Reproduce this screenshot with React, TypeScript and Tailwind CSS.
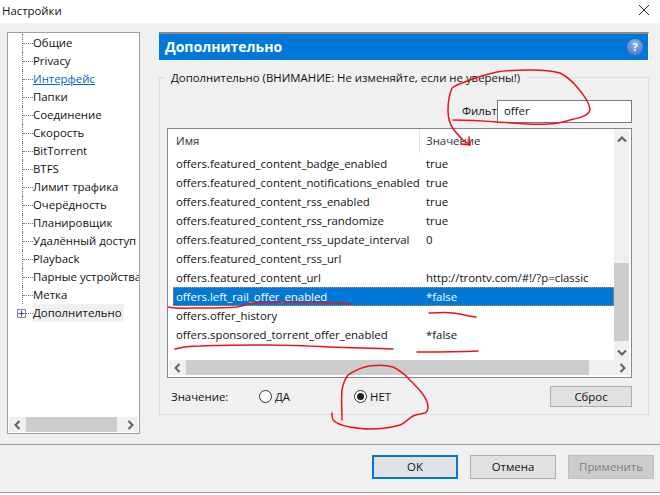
const font = "[font-family:'Open_Sans','Noto_Sans',sans-serif]"

const treeItems = [
  "Общие",
  "Privacy",
  "Интерфейс",
  "Папки",
  "Соединение",
  "Скорость",
  "BitTorrent",
  "BTFS",
  "Лимит трафика",
  "Очерёдность",
  "Планировщик",
  "Удалённый доступ",
  "Playback",
  "Парные устройства",
  "Метка",
]

const rows = [
  { name: "offers.featured_content_badge_enabled", value: "true" },
  { name: "offers.featured_content_notifications_enabled", value: "true" },
  { name: "offers.featured_content_rss_enabled", value: "true" },
  { name: "offers.featured_content_rss_randomize", value: "true" },
  { name: "offers.featured_content_rss_update_interval", value: "0" },
  { name: "offers.featured_content_rss_url", value: "" },
  { name: "offers.featured_content_url", value: "http://trontv.com/#!/?p=classic" },
  { name: "offers.left_rail_offer_enabled", value: "*false", selected: true },
  { name: "offers.offer_history", value: "" },
  { name: "offers.sponsored_torrent_offer_enabled", value: "*false" },
]

function Chevron({ dir }: { dir: "up" | "down" | "left" | "right" }) {
  const paths = {
    up: "M1 6.5 L5 2.5 L9 6.5",
    down: "M1 3.5 L5 7.5 L9 3.5",
    left: "M6.5 1 L2.5 5 L6.5 9",
    right: "M3.5 1 L7.5 5 L3.5 9",
  }
  return (
    <svg width="10" height="10" viewBox="0 0 10 10" fill="none">
      <path d={paths[dir]} stroke="#606060" strokeWidth="2" />
    </svg>
  )
}

function Button({ label, primary, disabled, className }: { label: string; primary?: boolean; disabled?: boolean; className?: string }) {
  return (
    <button
      className={
        "flex items-center justify-center text-[11.4px] " +
        (primary
          ? "border-2 border-[#0078d7] bg-[#e1e1e1] text-[#111] "
          : disabled
            ? "border border-[#bfbfbf] bg-[#cccccc] text-[#808080] "
            : "border border-[#adadad] bg-[#e1e1e1] text-[#111] ") +
        className
      }
    >
      {label}
    </button>
  )
}

function Tree() {
  return (
    <div className="flex flex-col w-[133px] h-[402px] border border-[#a0a0a0] bg-white">
      <div className="flex-1 pl-[14px] pt-[1px] text-[11.4px] text-[#111]">
        {treeItems.map(item => (
          <div key={item} className="flex items-center h-[18px]">
            <div className="flex items-center w-[11px] h-full border-l border-dotted border-[#777]">
              <div className="w-full border-t border-dotted border-[#777]" />
            </div>
            <span className={"whitespace-nowrap overflow-hidden max-w-[106px] " + (item === "Интерфейс" ? "text-[#0066cc] underline" : "")}>
              {item}
            </span>
          </div>
        ))}
        <div className="relative flex items-center h-[18px]">
          <div className="flex items-center w-[11px] h-full">
            <div className="w-full border-t border-dotted border-[#777]" />
          </div>
          <div className="absolute left-[-5px] top-[5px] flex items-center justify-center w-[9px] h-[9px] border border-[#8a8a8a] bg-white">
            <svg width="7" height="7" viewBox="0 0 7 7">
              <path d="M0.5 3.5 H6.5 M3.5 0.5 V6.5" stroke="#2a4a9a" strokeWidth="1" />
            </svg>
          </div>
          <span className="pr-[2px] bg-[#f0f0f0] whitespace-nowrap">Дополнительно</span>
        </div>
      </div>
      <div className="flex items-center h-[15px] mx-[1px] mb-[1px] bg-[#f0f0f0]">
        <div className="flex items-center justify-center w-[17px]"><Chevron dir="left" /></div>
        <div className="w-[91px] h-full bg-[#cdcdcd]" />
        <div className="flex-1" />
        <div className="flex items-center justify-center w-[17px]"><Chevron dir="right" /></div>
      </div>
    </div>
  )
}

function OptionList() {
  return (
    <div className="flex flex-col h-[250px] border border-[#828790] bg-white">
      <div className="flex flex-1 min-h-0">
        <div className="flex flex-col flex-1 min-w-0">
          <div className="flex h-[24px] text-[11.4px] text-[#333]">
            <div className="flex items-center w-[252px] pl-[8px] border-r border-[#e5e5e5]">Имя</div>
            <div className="flex items-center pl-[6px]">Значение</div>
          </div>
          <div className="pt-[1px] text-[11.4px] text-[#111]">
            {rows.map(row => (
              <div
                key={row.name}
                className={
                  "flex items-center h-[19px] ml-[5px] " +
                  (row.selected ? "bg-[#0078d7] text-white outline outline-dotted outline-[#d09040] -outline-offset-1" : "")
                }
              >
                <span className="w-[248px] pl-[3px] whitespace-nowrap">{row.name}</span>
                <span className="pl-[5px] whitespace-nowrap">{row.value}</span>
              </div>
            ))}
          </div>
        </div>
        <div className="flex flex-col w-[15px] mr-[2px] bg-[#f0f0f0]">
          <div className="flex items-center justify-center h-[17px] mt-[2px]"><Chevron dir="up" /></div>
          <div className="flex-1 pt-[115px]">
            <div className="h-[78px] bg-[#cdcdcd]" />
          </div>
          <div className="flex items-center justify-center h-[17px]"><Chevron dir="down" /></div>
        </div>
      </div>
      <div className="flex items-center h-[15px] mx-[1px] mb-[2px] bg-[#f0f0f0]">
        <div className="flex items-center justify-center w-[17px]"><Chevron dir="left" /></div>
        <div className="w-[403px] h-full bg-[#cdcdcd]" />
        <div className="flex-1" />
        <div className="flex items-center justify-center w-[17px]"><Chevron dir="right" /></div>
      </div>
    </div>
  )
}

function Radio({ label, checked }: { label: string; checked?: boolean }) {
  return (
    <label className="flex items-center gap-[3px]">
      <span className="flex items-center justify-center w-[13px] h-[13px] rounded-full border border-[#333] bg-white">
        {checked && <span className="w-[7px] h-[7px] rounded-full bg-[#222]" />}
      </span>
      {label}
    </label>
  )
}

function Annotations() {
  return (
    <svg className="absolute left-0 top-0 pointer-events-none" width="660" height="495" viewBox="0 0 660 495" fill="none" stroke="#e8141c" strokeWidth="1.5" strokeLinecap="round" strokeLinejoin="round">
      <path d="M453 120 C470 120 485 121 497 122 C515 123 532 125 547 124 C556 124 564 122 570 120 C578 118 590 116 590 109 C589 102 584 95 577 87 C572 81 566 76 560 73 C550 70 540 70 530 70 C518 70 507 70 497 72 C487 74 478 77 470 80 C463 83 457 84 452 88 C449 95 448 102 448 110 C448 116 449 122 452 127 C455 132 459 136 463 140 L470 145" />
      <path d="M461 144 L470 145 L469 137" />
      <path d="M168 307 C178 309 190 308 200 308 C212 308 226 308 237 307 C243 306 247 304 253 303 C262 302 272 302 283 302 C305 302 330 302 350 304" />
      <path d="M175 349 C182 347 191 346 200 346 C222 345 245 345 267 345 C290 345 310 346 330 347 C350 348 372 348 393 349" />
      <path d="M429 313 C437 313 445 312 453 313 C461 314 468 316 476 317" />
      <path d="M417 352 C437 352 458 352 478 351" />
      <path d="M342 420 C342 410 341 400 342 390 C343 384 345 379 348 375 C354 371 362 367 370 366 C378 365 386 365 393 367 C398 369 401 372 405 375 C411 381 417 387 422 393 C425 397 428 402 428 407 C428 411 427 412 425 413 C420 414 417 414 413 416 C408 419 405 423 400 425 C390 428 380 429 370 429 C363 429 356 428 350 427 C344 426 337 424 333 420 C332 418 332 415 332 413" />
    </svg>
  )
}

export default function App() {
  return (
    <div className={"relative flex flex-col w-[660px] h-[495px] bg-white overflow-hidden " + font}>
      <div className="flex items-start justify-between h-[23px] pl-[2px] pr-[11px] pt-[2px] text-[11.4px] text-[#111]">
        <span>Настройки</span>
        <svg className="mt-[3px]" width="10" height="10" viewBox="0 0 10 10" fill="none">
          <path d="M0 0 L10 10 M10 0 L0 10" stroke="#222" strokeWidth="1" />
        </svg>
      </div>

      <div className="flex gap-[19px] h-[421px] pl-[7px] pt-[9px] bg-[#f0f0f0]">
        <Tree />
        <div className="flex flex-col w-[491px] text-[11.4px] text-[#111]">
          <div className="flex items-center justify-between w-[490px] h-[29px] pl-[6px] pr-[5px] border-t-2 border-[#8a8a8a] border-r border-r-white border-b border-b-white bg-[#0078d7]">
            <span className="pb-[2px] text-[14px] font-bold text-white">Дополнительно</span>
            <span className="flex items-center justify-center w-[16px] h-[16px] rounded-full bg-[radial-gradient(circle_at_50%_30%,#8fb4e8,#3f6fc0)] text-[11px] font-bold text-white">?</span>
          </div>
          <div className="relative mt-[16px] w-[490px] h-[338px] border border-[#dcdcdc] pl-[7px] pr-[16px]">
            <span className="absolute left-[4px] top-[-9px] px-[7px] bg-[#f0f0f0] whitespace-nowrap">
              Дополнительно (ВНИМАНИЕ: Не изменяйте, если не уверены!)
            </span>
            <div className="flex justify-end items-center h-[50px] pt-[16px]">
              <span className="w-[35px] whitespace-nowrap">Фильт</span>
              <div className="flex items-center w-[135px] h-[23px] pl-[6px] border border-[#7a7a7a] bg-white">offer</div>
            </div>
            <OptionList />
            <div className="flex items-center h-[37px]">
              <span className="w-[92px] pl-[4px]">Значение:</span>
              <div className="w-[95px]"><Radio label="ДА" /></div>
              <Radio label="НЕТ" checked />
              <Button label="Сброс" className="ml-auto w-[82px] h-[21px]" />
            </div>
          </div>
        </div>
      </div>

      <div className="flex justify-end items-start gap-[12px] h-[49px] pt-[10px] pr-[6px] border-y border-[#a0a0a0] bg-[#f0f0f0]">
        <Button label="OK" primary className="w-[86px] h-[24px]" />
        <Button label="Отмена" className="w-[86px] h-[24px]" />
        <Button label="Применить" disabled className="w-[86px] h-[24px]" />
      </div>
      <Annotations />
    </div>
  )
}
